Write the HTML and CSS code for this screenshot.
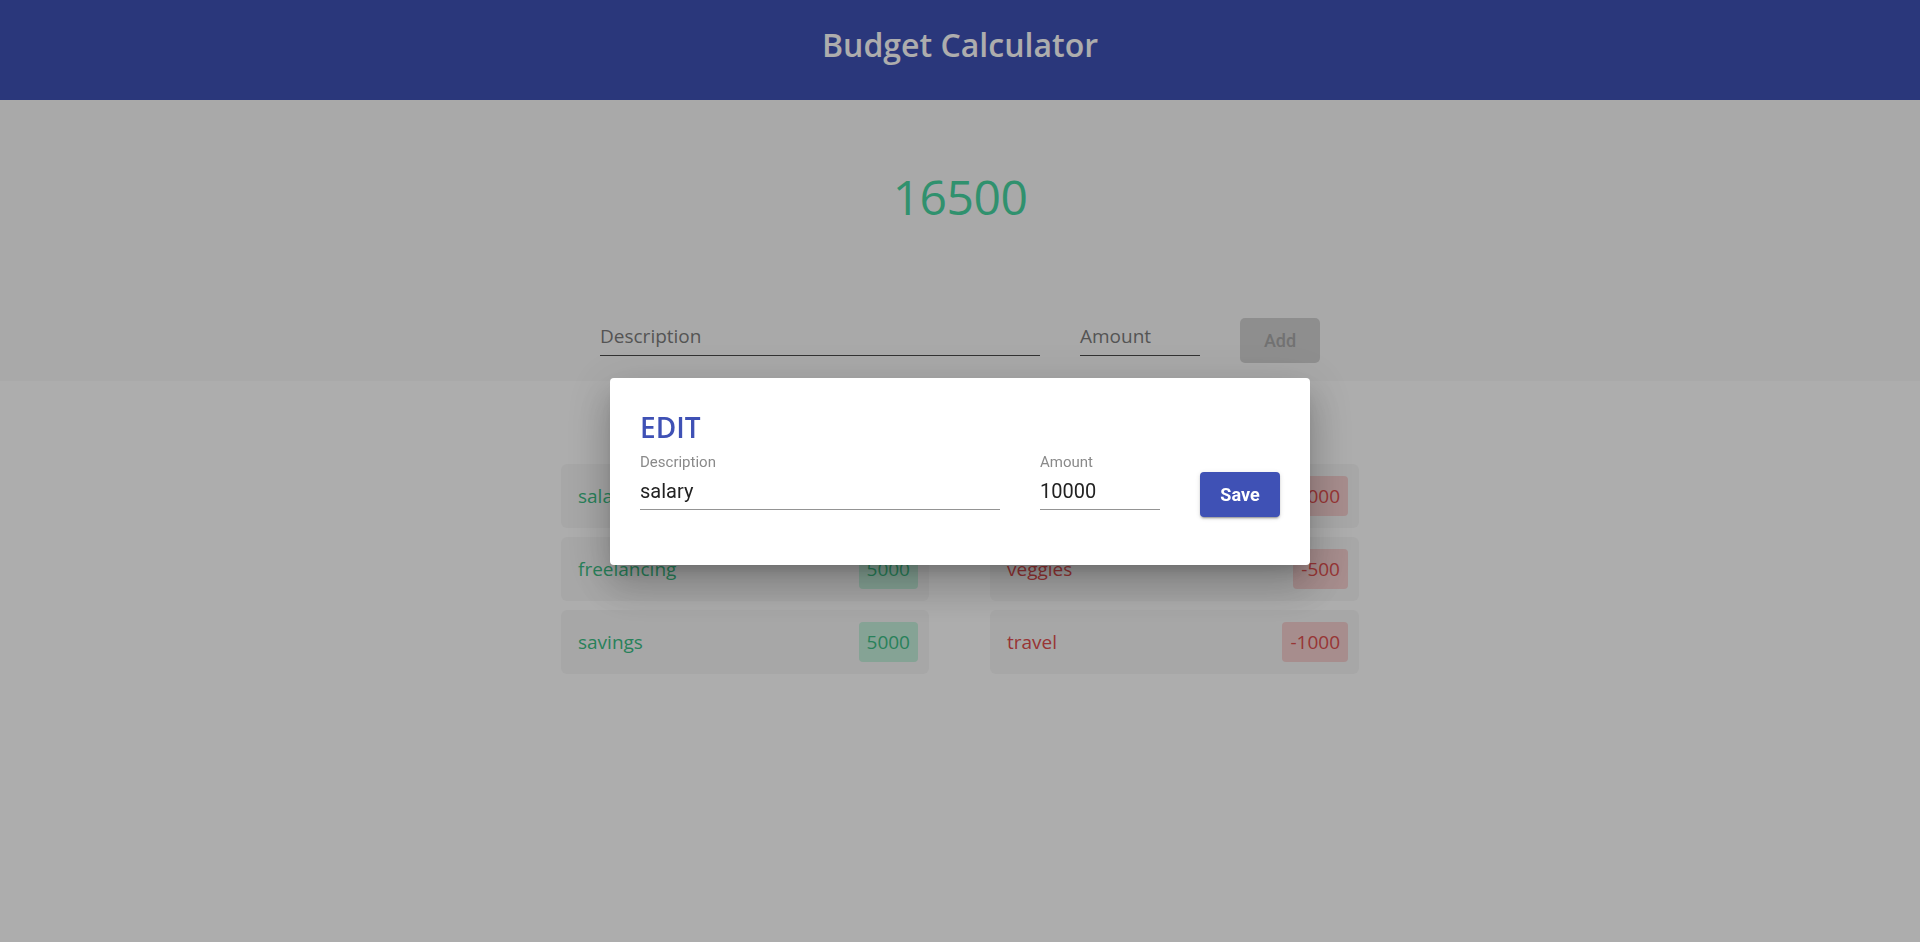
FILE: index.html
```html
<!DOCTYPE html>
<html lang="en">
<head>
<meta charset="utf-8">
<title>Budget Calculator</title>
<link rel="stylesheet" href="styles.css">
</head>
<body>
<header class="app-header">
  <h1 class="app-title">Budget Calculator</h1>
</header>
<section class="summary">
  <div class="total">16500</div>
  <form class="entry-form">
    <label class="line-field line-field--desc"><span class="placeholder">Description</span></label>
    <label class="line-field line-field--amount"><span class="placeholder">Amount</span></label>
    <button type="button" class="add-btn" disabled>Add</button>
  </form>
</section>
<main class="ledger">
  <div class="columns">
    <ul class="column">
      <li class="entry entry--income"><span class="entry-name">salary</span><span class="badge">10000</span></li>
      <li class="entry entry--income"><span class="entry-name">freelancing</span><span class="badge">5000</span></li>
      <li class="entry entry--income"><span class="entry-name">savings</span><span class="badge">5000</span></li>
    </ul>
    <ul class="column">
      <li class="entry entry--expense"><span class="entry-name">rent</span><span class="badge">-2000</span></li>
      <li class="entry entry--expense"><span class="entry-name">veggies</span><span class="badge">-500</span></li>
      <li class="entry entry--expense"><span class="entry-name">travel</span><span class="badge">-1000</span></li>
    </ul>
  </div>
</main>
<div class="backdrop">
  <div class="dialog">
    <h2 class="dialog-title">EDIT</h2>
    <div class="dialog-row">
      <div class="mat-field mat-field--desc">
        <span class="mat-label">Description</span>
        <span class="mat-input">salary</span>
      </div>
      <div class="mat-field mat-field--amount">
        <span class="mat-label">Amount</span>
        <span class="mat-input">10000</span>
      </div>
      <button type="button" class="save-btn">Save</button>
    </div>
  </div>
</div>
</body>
</html>
```
FILE: styles.css
```css
* { box-sizing: border-box; }
html, body { margin: 0; padding: 0; }
body {
  font-family: "Open Sans", "Noto Sans", sans-serif;
  background: #ffffff;
  color: #333;
  min-height: 942px;
}
.app-header {
  height: 100px;
  background: #3f51b5;
  padding-top: 25px;
}
.app-title {
  margin: 0;
  text-align: center;
  font-size: 32px;
  line-height: 40px;
  font-weight: 600;
  color: #ffffff;
}
.summary {
  background: #fafafa;
  height: 281px;
  padding-top: 65px;
}
.total {
  text-align: center;
  font-size: 48px;
  line-height: 64px;
  color: #48d6a2;
  letter-spacing: -0.5px;
}
.entry-form {
  display: flex;
  justify-content: center;
  align-items: flex-start;
  gap: 40px;
  margin-top: 89px;
}
.line-field {
  display: block;
  padding-top: 6px;
  padding-bottom: 7px;
  border-bottom: 1px solid #4a4a4a;
  font-size: 19px;
  line-height: 24px;
}
.line-field--desc { width: 440px; }
.line-field--amount { width: 120px; }
.placeholder { color: #7d7d7d; }
.add-btn {
  width: 80px;
  height: 45px;
  border: none;
  border-radius: 5px;
  background: #d2d2d2;
  color: #a8a8a8;
  font-family: Roboto, sans-serif;
  font-size: 18px;
  font-weight: 500;
  padding: 0;
}
.ledger {
  padding-top: 83px;
}
.columns {
  width: 798px;
  margin: 0 auto;
  display: grid;
  grid-template-columns: 368px 369px;
  column-gap: 61px;
}
.column {
  list-style: none;
  margin: 0;
  padding: 0;
  display: flex;
  flex-direction: column;
  gap: 9px;
}
.entry {
  height: 64px;
  border-radius: 6px;
  background: #f7f7f7;
  display: flex;
  align-items: center;
  justify-content: space-between;
  padding: 0 11px 0 17px;
  font-size: 19px;
}
.badge {
  height: 40px;
  line-height: 40px;
  padding: 0 8px;
  border-radius: 4px;
}
.entry--income { color: #3cbf86; }
.entry--income .badge { background: #c4f0dc; }
.entry--expense { color: #e04e4e; }
.entry--expense .badge { background: #f6d0d0; }

.backdrop {
  position: fixed;
  inset: 0;
  background: rgba(0, 0, 0, 0.32);
  display: flex;
  align-items: center;
  justify-content: center;
}
.dialog {
  width: 700px;
  background: #ffffff;
  border-radius: 4px;
  padding: 33px 30px 48px;
  box-shadow: 0 11px 15px -7px rgba(0,0,0,.2), 0 24px 38px 3px rgba(0,0,0,.14), 0 9px 46px 8px rgba(0,0,0,.12);
}
.dialog-title {
  margin: 0 0 10px;
  font-size: 28px;
  line-height: 32px;
  font-weight: 600;
  color: #3f51b5;
}
.dialog-row {
  display: flex;
  align-items: flex-start;
  gap: 40px;
  font-family: Roboto, sans-serif;
}
.mat-field {
  display: flex;
  flex-direction: column;
  border-bottom: 1px solid #949494;
  padding-bottom: 6px;
}
.mat-field--desc { width: 360px; }
.mat-field--amount { width: 120px; }
.mat-label {
  font-size: 15px;
  line-height: 18px;
  color: #8a8a8a;
}
.mat-input {
  margin-top: 8px;
  font-size: 20px;
  line-height: 24px;
  color: #222;
}
.save-btn {
  margin-top: 19px;
  width: 80px;
  height: 45px;
  border: none;
  border-radius: 4px;
  background: #3f51b5;
  color: #ffffff;
  font-family: Roboto, sans-serif;
  font-size: 18px;
  font-weight: 700;
  padding: 0;
  box-shadow: 0 3px 1px -2px rgba(0,0,0,.2), 0 2px 2px 0 rgba(0,0,0,.14), 0 1px 5px 0 rgba(0,0,0,.12);
}
```
